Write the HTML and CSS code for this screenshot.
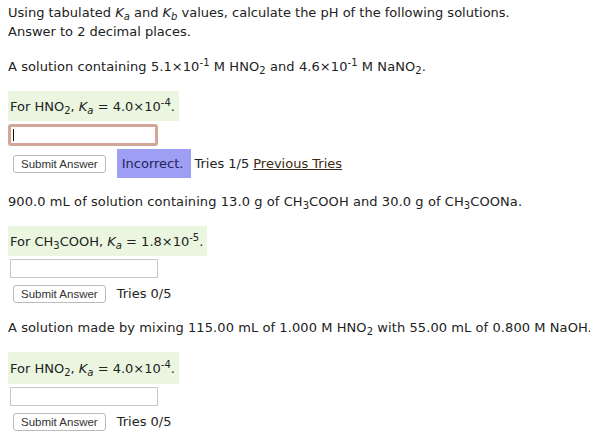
FILE: index.html
```html
<!DOCTYPE html>
<html lang="en">
<head>
    <meta charset="UTF-8">
    <meta name="viewport" content="width=device-width, initial-scale=1.0">
    <title>Buffer pH</title>
    <link rel="stylesheet" href="styles.css">
</head>
<body>

<div class="problem">
    <p class="intro">Using tabulated <i>K<sub>a</sub></i> and <i>K<sub>b</sub></i> values, calculate the pH of the following solutions.<br>Answer to 2 decimal places.</p>

    <div class="part first">
        <p class="prompt">A solution containing 5.1×10<sup>-1</sup> M HNO<sub>2</sub> and 4.6×10<sup>-1</sup> M NaNO<sub>2</sub>.</p>
        <div class="given">For HNO<sub>2</sub>, <i>K<sub>a</sub></i> = 4.0×10<sup>-4</sup>.</div>
        <div class="field"><input type="text" class="answer wrong"><span class="caret"></span></div>
        <div class="actions">
            <button>Submit Answer</button>
            <span class="badge">Incorrect.</span>
            <span>Tries 1/5</span>
            <a href="#" class="prev">Previous Tries</a>
        </div>
    </div>

    <div class="part">
        <p class="prompt">900.0 mL of solution containing 13.0 g of CH<sub>3</sub>COOH and 30.0 g of CH<sub>3</sub>COONa.</p>
        <div class="given">For CH<sub>3</sub>COOH, <i>K<sub>a</sub></i> = 1.8×10<sup>-5</sup>.</div>
        <div class="field"><input type="text" class="answer"></div>
        <div class="actions">
            <button>Submit Answer</button>
            <span>Tries 0/5</span>
        </div>
    </div>

    <div class="part last">
        <p class="prompt">A solution made by mixing 115.00 mL of 1.000 M HNO<sub>2</sub> with 55.00 mL of 0.800 M NaOH.</p>
        <div class="given">For HNO<sub>2</sub>, <i>K<sub>a</sub></i> = 4.0×10<sup>-4</sup>.</div>
        <div class="field"><input type="text" class="answer"></div>
        <div class="actions">
            <button>Submit Answer</button>
            <span>Tries 0/5</span>
        </div>
    </div>
</div>

</body>
</html>
```

FILE: styles.css
```css
body {
    margin: 3px 8px;
    font-family: "DejaVu Sans", Verdana, sans-serif;
    font-size: 13px;
    line-height: 19px;
    color: #222;
    background: #fff;
}
p {
    margin: 0;
}
sub, sup {
    font-size: 10px;
    line-height: 0;
}
sub {
    vertical-align: -3px;
}
sup {
    vertical-align: 5px;
}
.intro {
    margin-bottom: 16px;
}
.part {
    margin-bottom: 14px;
}
.part + .part {
    margin-bottom: 15px;
}
.prompt {
    margin-bottom: 15px;
    white-space: nowrap;
    letter-spacing: 0.08px;
}
.given {
    display: inline-block;
    background: #eaf6df;
    padding: 6px 4px 5px 2px;
}
.last .given {
    padding: 7px 4px 6px 2px;
}
.field {
    position: relative;
    margin-top: 3px;
}
.answer {
    box-sizing: border-box;
    width: 148px;
    height: 19px;
    margin: 0 0 0 2px;
    border: 1px solid #c8c8c8;
    background: #fff;
    display: block;
}
.answer.wrong {
    width: 150px;
    height: 22px;
    margin-left: 0;
    border: 3px solid #d2a797;
    border-radius: 3px;
}
.caret {
    position: absolute;
    left: 5px;
    top: 5px;
    width: 1px;
    height: 12px;
    background: #111;
}
.actions {
    display: flex;
    align-items: center;
    margin-top: 6px;
}
.first .actions {
    margin-top: 3px;
}
button {
    font-family: "Liberation Sans", Arial, sans-serif;
    font-size: 11.5px;
    color: #333;
    height: 18px;
    padding: 0 7px;
    margin: 0 11px 0 5px;
    background: #fff;
    border: 1px solid #bbb;
    border-radius: 3px;
}
.badge {
    background: #9e9ef5;
    color: #23235a;
    padding: 5px 8px 5px 5px;
    margin-right: 3px;
}
.prev {
    color: #3b2a10;
    margin-left: 4px;
}
```
